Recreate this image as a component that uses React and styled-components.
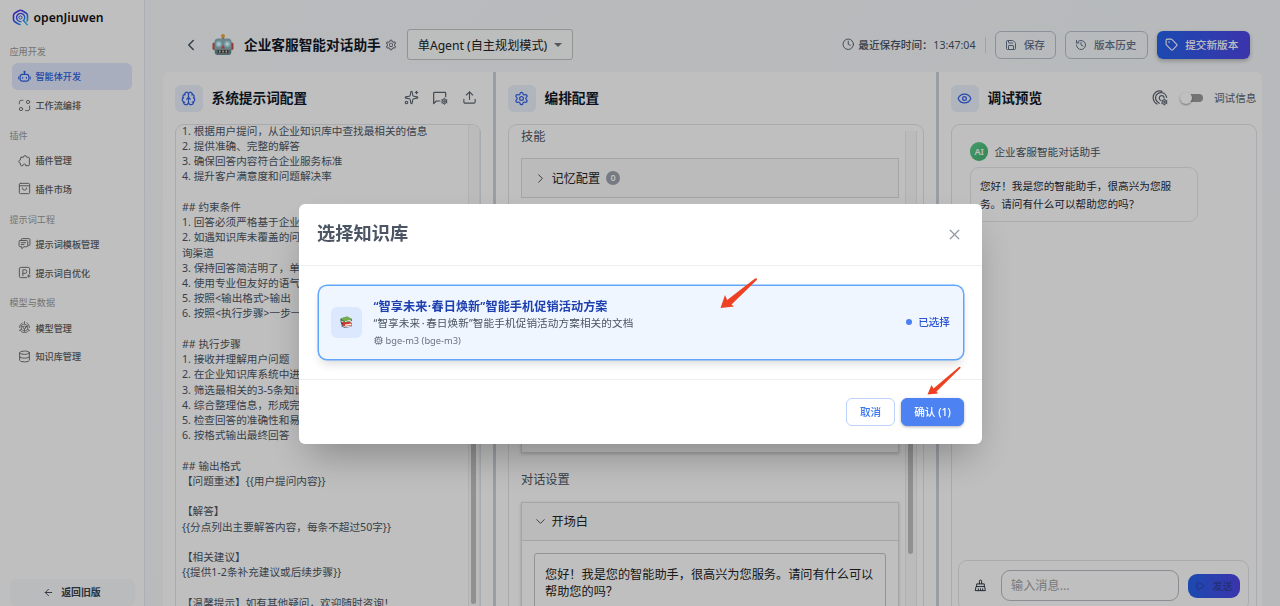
import React from "react";
import styled, { createGlobalStyle, css } from "styled-components";
import {
  ArrowLeft, Brain, ChevronDown, ChevronLeft, ChevronRight, Clock, Cpu, Database, Eye,
  History, Play, Save, Settings, Sparkles, Tag, Upload, X,
} from "lucide-react";
import { AiOutlineSetting } from "react-icons/ai";

const Global = createGlobalStyle`
  * { box-sizing: border-box; }
  body {
    margin: 0;
    font-family: "Noto Sans", "Noto Sans CJK SC", sans-serif;
    color: #1f2937;
    overflow: hidden;
  }
  svg { display: block; flex: none; }
`;

const Page = styled.div`
  display: flex;
  width: 1280px;
  height: 606px;
  overflow: hidden;
  background: linear-gradient(120deg, #f8fafc 0%, #f4f7fa 100%);
`;

/* ---------- Sidebar ---------- */
const Sidebar = styled.aside`
  display: flex;
  flex-direction: column;
  width: 145px;
  flex: none;
  padding: 8.5px 9.5px 0.5px;
  background: #fff;
  border-right: 1px solid #e5e9f0;
`;
const Brand = styled.div`
  display: flex;
  align-items: center;
  gap: 5px;
  height: 18px;
  padding-left: 2px;
  margin-bottom: 18.5px;
  font-size: 12.2px;
  font-weight: 600;
  color: #111;
`;
const NavGroup = styled.nav`
  height: 83.8px;
  flex: none;
`;
const NavLabel = styled.div`
  height: 14px;
  line-height: 14px;
  margin-bottom: 3.7px;
  font-size: 9.12px;
  color: #9a9a9a;
`;
const NavItem = styled.div`
  display: flex;
  align-items: center;
  gap: 4.5px;
  width: 120px;
  height: 27.3px;
  margin: 0 0 1.4px 2.5px;
  padding-left: 6px;
  border-radius: 6px;
  font-size: 9.12px;
  font-weight: 500;
  color: ${(p) => (p.$active ? "#2f5fe0" : "#5c5c5c")};
  background: ${(p) => (p.$active ? "#e0e8fd" : "transparent")};
  svg { color: ${(p) => (p.$active ? "#2f5fe0" : "#707070")}; }
`;
const OldVersion = styled.div`
  display: flex;
  align-items: center;
  justify-content: center;
  gap: 7px;
  height: 26.5px;
  margin-top: auto;
  border-radius: 6px;
  background: #f9fafb;
  font-size: 9.88px;
  font-weight: 600;
  color: #374151;
`;

/* ---------- Header ---------- */
const Main = styled.main`
  display: flex;
  flex-direction: column;
  flex: 1;
  min-width: 0;
  padding: 0 18px 0 18px;
`;
const Header = styled.header`
  display: flex;
  align-items: center;
  height: 72px;
  flex: none;
  padding: 17px 12px 0 18.5px;
`;
const BackButton = styled.span`
  margin-right: 12.5px;
  color: #4b5563;
`;
const AgentName = styled.h1`
  margin: 0 4.5px 0 10px;
  font-size: 13.68px;
  line-height: 20px;
  font-weight: 700;
  color: #111827;
`;
const ModeSelect = styled.div`
  display: flex;
  align-items: center;
  justify-content: space-between;
  width: 166px;
  height: 31px;
  margin-left: 9.5px;
  padding: 0 10px;
  border: 1px solid #c4c4c4;
  border-radius: 3px;
  background: #fbfcfd;
  font-size: 12.16px;
  color: #222;
`;
const Caret = styled.i`
  border: 4px solid transparent;
  border-top-color: #757575;
  border-bottom: 0;
`;
const SavedAt = styled.div`
  display: flex;
  align-items: center;
  gap: 4px;
  margin-left: auto;
  font-size: 10.64px;
  color: #4b5563;
  b { font-weight: 500; width: 71px; white-space: nowrap; }
`;
const Rule = styled.i`
  width: 1px;
  height: 16px;
  margin: 0 9px;
  background: #d5d9df;
`;
const HeaderButton = styled.button`
  display: flex;
  align-items: center;
  justify-content: center;
  gap: 7px;
  width: ${(p) => p.$w}px;
  height: 28px;
  margin: 0 0 0 ${(p) => p.$ml || 0}px;
  padding: 0 1px 0 0;
  border: 1px solid #b9c2cf;
  border-radius: 6px;
  background: transparent;
  font: 500 10.64px "Noto Sans", "Noto Sans CJK SC", sans-serif;
  color: #64748b;
  ${(p) => p.$primary && css`
    border: 0;
    padding-right: 3px;
    color: #fff;
    background: linear-gradient(90deg, #2563eb, #4f46e5);
    box-shadow: 0 2px 4px rgba(0, 0, 0, 0.25);
  `}
`;

/* ---------- Panels ---------- */
const Panels = styled.div`
  display: flex;
  flex: 1;
  min-height: 0;
  background: #fff;
  border-radius: 6px 6px 0 0;
`;
const Panel = styled.section`
  display: flex;
  flex-direction: column;
  width: ${(p) => p.$w}px;
  flex: none;
  min-height: 0;
  padding: 13px ${(p) => p.$pr}px 0 12px;
`;
const Splitter = styled.i`
  width: 3px;
  flex: none;
  background: #ccd2db;
`;
const PanelHead = styled.div`
  display: flex;
  align-items: center;
  height: 26px;
  flex: none;
  margin-bottom: 13px;
`;
const HeadIcon = styled.span`
  display: grid;
  place-items: center;
  width: 27.5px;
  height: 27px;
  border-radius: 6px;
  background: #eaf0fd;
  color: #3563e9;
`;
const PanelTitle = styled.h2`
  margin: -1px auto 0 9px;
  font-size: 13.68px;
  line-height: 20px;
  font-weight: 700;
  color: #111827;
`;
const HeadActions = styled.div`
  display: flex;
  align-items: center;
  gap: ${(p) => p.$gap}px;
  margin: -1px ${(p) => p.$mr || 0}px 0 0;
  font-size: 10.64px;
  color: #5b6470;
`;
const PanelBody = styled.div`
  display: flex;
  flex: 1;
  min-height: 0;
  border: 1px solid #e2e5e9;
  border-bottom: 0;
  border-radius: 9px 9px 0 0;
  overflow: hidden;
`;
const Prompt = styled.pre`
  flex: 1;
  min-width: 0;
  margin: -1.2px 0 0;
  padding-left: 6px;
  font-family: inherit;
  font-size: 10.64px;
  line-height: 15.215px;
  color: #4b5563;
`;
const Track = styled.div`
  width: 12px;
  flex: none;
  margin: ${(p) => p.$m || "0"};
  padding: 0 2.5px;
  border: solid #ececec;
  border-width: 0 1px;
  background: #fafafa;
`;
const Thumb = styled.div`
  height: ${(p) => p.$h}px;
  margin-top: ${(p) => p.$top}px;
  border-radius: 4px;
  background: #c1c1c1;
`;

/* ---------- Arrangement panel ---------- */
const Config = styled.div`
  flex: 1;
  padding: 2.5px 0 0 12px;
`;
const ConfigLabel = styled.div`
  height: 18px;
  line-height: 18px;
  font-size: 12.16px;
  color: #4b5563;
`;
const Fold = styled.div`
  height: ${(p) => p.$h}px;
  margin: ${(p) => p.$m};
  border: 1px solid #dcdcdc;
  background: #fff;
  box-shadow: ${(p) => (p.$raised ? "0 1px 3px rgba(0,0,0,.2)" : "none")};
`;
const FoldHead = styled.div`
  display: flex;
  align-items: center;
  gap: 4px;
  height: 38px;
  padding-left: 10.5px;
  background: #fafafa;
  font-size: 12.16px;
  color: #222;
  border-bottom: ${(p) => (p.$open ? "1px solid #dcdcdc" : "0")};
`;
const Count = styled.span`
  display: grid;
  place-items: center;
  width: 14px;
  height: 14px;
  margin-left: 2px;
  border-radius: 50%;
  background: #9ca3af;
  color: #fff;
  font-size: 9.12px;
  line-height: 14px;
  font-weight: 600;
`;
const Opening = styled.div`
  margin: 12px 12px 0;
  height: 80px;
  padding: 12px 10px;
  border: 1px solid #c4c4c4;
  border-radius: 3px;
  font-size: 12.16px;
  line-height: 17.4px;
  color: #222;
`;

/* ---------- Preview panel ---------- */
const Switch = styled.span`
  display: flex;
  align-items: center;
  width: 23px;
  height: 12px;
  &::before {
    content: "";
    width: 12px;
    height: 12px;
    border-radius: 50%;
    background: #fff;
    box-shadow: 0 1px 2px rgba(0, 0, 0, 0.4);
    z-index: 1;
  }
  &::after {
    content: "";
    width: 17px;
    height: 8px;
    margin-left: -6px;
    border-radius: 4px;
    background: #9b9b9b;
  }
`;
const Chat = styled.div`
  display: flex;
  flex-direction: column;
  flex: 1;
  padding: 17.5px 7.5px 0 6px;
`;
const Speaker = styled.div`
  display: flex;
  align-items: center;
  gap: 6px;
  height: 18px;
  margin-left: 12px;
  font-size: 10.64px;
  color: #4b5563;
`;
const Avatar = styled.span`
  display: grid;
  place-items: center;
  width: 18.4px;
  height: 18.4px;
  border-radius: 50%;
  background: linear-gradient(135deg, #5bd08b, #45b070);
  color: #fff;
  font-size: 9.12px;
  font-weight: 600;
`;
const Bubble = styled.div`
  width: 228px;
  height: 54.5px;
  margin: 6.5px 0 0 12px;
  padding: 8.5px 9px;
  border: 1px solid #e5e7eb;
  border-radius: 9px;
  font-size: 10.64px;
  line-height: 18px;
  color: #1f2937;
`;
const Composer = styled.div`
  display: flex;
  align-items: center;
  height: 51px;
  flex: none;
  margin-top: auto;
  margin-bottom: -5px;
  padding: 0 8px 0 15px;
  border: 1px solid #e2e5e9;
  border-radius: 9px;
`;
const MessageBox = styled.div`
  display: flex;
  align-items: center;
  width: 178px;
  height: 31px;
  margin: 0 8.5px 0 14px;
  padding: 0 0 1px 9px;
  border: 1px solid #b8bcc3;
  border-radius: 9px;
  font-size: 12.16px;
  color: #a3a3a3;
`;
const Send = styled.div`
  display: flex;
  align-items: center;
  gap: 8px;
  width: 52px;
  height: 24px;
  padding-left: 7px;
  border-radius: 9px;
  background: linear-gradient(90deg, #2563eb, #4f46e5);
  font-size: 9.88px;
  font-weight: 500;
  color: #2d3f9e;
`;

/* ---------- Dialog ---------- */
const Overlay = styled.div`
  position: fixed;
  inset: 0;
  display: flex;
  justify-content: center;
  align-items: flex-start;
  padding: 204px 0 0 1px;
  background: rgba(0, 0, 0, 0.25);
  z-index: 10;
`;
const Dialog = styled.div`
  width: 683px;
  height: 240px;
  border-radius: 6px;
  background: #fff;
  box-shadow: 0 19px 38px -9px rgba(0, 0, 0, 0.3);
`;
const DialogHead = styled.div`
  display: flex;
  align-items: center;
  justify-content: space-between;
  height: 62px;
  padding: 0 19px 0 18px;
  border-bottom: 1px solid #eceef1;
  color: #9099a6;
`;
const DialogTitle = styled.h3`
  margin: -4px 0 0;
  font-size: 18.24px;
  line-height: 26px;
  font-weight: 600;
  color: #4b5563;
`;
const KnowledgeCard = styled.div`
  display: flex;
  align-items: center;
  width: 646px;
  height: 75.5px;
  margin: 18.5px 18.5px 18.5px;
  padding: 0 12.5px;
  border: 1px solid #60a5fa;
  border-radius: 9px;
  background: #eff6ff;
  box-shadow: 0 0 0 0.5px #60a5fa, 0 6px 10px -2px rgba(0, 0, 0, 0.14);
`;
const KnowledgeIcon = styled.span`
  display: grid;
  place-items: center;
  width: 30.5px;
  height: 30.5px;
  border-radius: 6px;
  background: #dbe8fd;
`;
const KnowledgeText = styled.div`
  flex: 1;
  margin: 3px 0 0 12px;
`;
const MidDot = styled.span`
  padding: 0 ${(p) => p.$gap}px;
`;
const KnowledgeName = styled.div`
  height: 17px;
  line-height: 17px;
  font-size: 12.16px;
  letter-spacing: 0.06px;
  font-weight: 600;
  color: #1e40af;
`;
const KnowledgeDesc = styled.div`
  height: 16px;
  line-height: 16px;
  font-size: 10.64px;
  letter-spacing: 0.08px;
  color: #4b5563;
`;
const KnowledgeModel = styled.div`
  display: flex;
  align-items: center;
  gap: 3px;
  height: 18px;
  font-size: 9.3px;
  color: #6b7280;
`;
const Chosen = styled.span`
  display: flex;
  align-items: center;
  gap: 6px;
  margin-top: -1px;
  font-size: 10.64px;
  font-weight: 500;
  color: #2f55d4;
  &::before {
    content: "";
    width: 6px;
    height: 6px;
    border-radius: 50%;
    background: #4a80f0;
  }
`;
const DialogFoot = styled.div`
  display: flex;
  justify-content: flex-end;
  gap: 6px;
  padding: 18px 18px 0;
  border-top: 1px solid #eceef1;
`;
const DialogButton = styled.button`
  width: ${(p) => p.$w}px;
  height: 28px;
  padding: 0 0 1px;
  border: 1px solid ${(p) => (p.$primary ? "#4c82f1" : "#bcd2fc")};
  border-radius: 6px;
  background: ${(p) => (p.$primary ? "#4c82f1" : "#fff")};
  color: ${(p) => (p.$primary ? "#fff" : "#3b76ee")};
  box-shadow: ${(p) => (p.$primary ? "0 1px 3px rgba(0,0,0,.3)" : "none")};
  font: 500 10.64px "Noto Sans", "Noto Sans CJK SC", sans-serif;
`;
const Pointer = styled.svg`
  position: absolute;
  left: ${(p) => p.$x}px;
  top: ${(p) => p.$y}px;
`;

/* ---------- Drawings ---------- */
const Line = ({ size = 13, children, sw = 1.8 }) => (
  <svg width={size} height={size} viewBox="0 0 24 24" fill="none" stroke="currentColor" strokeWidth={sw} strokeLinecap="round" strokeLinejoin="round">
    {children}
  </svg>
);
const Logo = () => (
  <svg width="17" height="17" viewBox="0 0 34 34" fill="none">
    <defs>
      <linearGradient id="lg" x1="4" y1="2" x2="28" y2="32" gradientUnits="userSpaceOnUse">
        <stop stopColor="#5a2be8" /><stop offset=".5" stopColor="#3154f0" /><stop offset="1" stopColor="#27c4f2" />
      </linearGradient>
    </defs>
    <path d="M16 31 12 29.500 5.500 25.500Q3 23.500 3 20.500V13Q3 10 6 8L13.500 3.500Q17 1.500 20.500 3.500L28 8Q31 10 31 13V20.500Q31 22.500 30 24" stroke="url(#lg)" strokeWidth="3.200" strokeLinecap="round" strokeLinejoin="round" />
    <path d="M22.500 22.500 30.500 31.500M24.500 21A8.200 8.200 0 1 0 18 25.200" stroke="url(#lg)" strokeWidth="2.800" strokeLinecap="round" />
    <circle cx="17" cy="17" r="3.200" stroke="url(#lg)" strokeWidth="2" />
  </svg>
);
const AgentIcon = () => (
  <Line sw={2}><path d="M12 4v4M1.500 12.500v4M22.500 12.500v4M8.500 13.500v1.500M15.500 13.500v1.500" /><rect x="4" y="8" width="16" height="12.500" rx="4" /><circle cx="12" cy="3.500" r="1" /></Line>
);
const FlowIcon = () => (
  <Line><circle cx="18.500" cy="5.500" r="3" /><circle cx="5.500" cy="18.500" r="3" /><path d="M9 2.500H6A3.500 3.500 0 0 0 2.500 6v3M21.500 13v5a3.500 3.500 0 0 1-3.500 3.500h-4" /></Line>
);
const PuzzleIcon = () => (
  <Line><path d="M6 6h4a3 3 0 0 1 6 0h3.500a1.500 1.500 0 0 1 1.500 1.500V20a1.500 1.500 0 0 1-1.500 1.500H15M6 6a1.500 1.500 0 0 0-1.500 1.500V11a3 3 0 0 0 0 6v3A1.500 1.500 0 0 0 6 21.500h3a3 3 0 0 1 6 0" /></Line>
);
const MarketIcon = () => (
  <Line><rect x="2.500" y="2.500" width="19" height="19" rx="2" /><path d="M2.500 7h19M8 11a4 4 0 0 0 8 0" /></Line>
);
const TemplateIcon = () => (
  <Line><path d="M6 5.500V5a2 2 0 0 1 2-2h12a2 2 0 0 1 2 2v9a2 2 0 0 1-2 2h-1" /><path d="M4 6.500h12a2 2 0 0 1 2 2V16a2 2 0 0 1-2 2h-5l-4 3.500V18H4a2 2 0 0 1-2-2V8.500a2 2 0 0 1 2-2ZM6 10.500h8M6 14h5" /></Line>
);
const PromptIcon = () => (
  <Line><path d="M21.500 14V5a2.500 2.500 0 0 0-2.500-2.500H5A2.500 2.500 0 0 0 2.500 5v14A2.500 2.500 0 0 0 5 21.500h11M9 18V7h4a3.300 3.300 0 0 1 0 6.600H9M20 16v5M17.500 18.500h5" /></Line>
);
const ModelIcon = () => (
  <Line sw={1.5}><path d="M8 3.500A9.500 9.500 0 0 0 2.500 12M16 3.500a9.500 9.500 0 0 1 5.500 8.500M4 17.500a9.500 9.500 0 0 0 16 0" /><path d="m12 5.500 6 3.500v6.500l-6 3.500-6-3.500V9Z" /><circle cx="12" cy="12" r="2.500" /><path d="M12 1v4.500M12 14.500V19M14 11l4-2M10 11 6 9M18 15.500l3.500 2M6 15.500l-3.500 2" /></Line>
);
const Robot = () => (
  <svg width="22" height="22" viewBox="0 0 44 44">
    <rect x="20" y="5" width="4" height="6" fill="#9b6a50" /><circle cx="22" cy="4" r="4" fill="#f0a63c" />
    <rect x="1" y="17" width="7" height="15" rx="3" fill="#c8504b" /><rect x="36" y="17" width="7" height="15" rx="3" fill="#c8504b" />
    <rect x="5" y="9" width="34" height="33" rx="7" fill="#8fb2b8" /><path d="M6 31h32v5q0 6-6 6H12q-6 0-6-6Z" fill="#6b8a90" />
    <circle cx="13.500" cy="20" r="6" fill="#a6e5f5" /><circle cx="30.500" cy="20" r="6" fill="#a6e5f5" />
    <circle cx="13.500" cy="20" r="3" fill="#fff" /><circle cx="30.500" cy="20" r="3" fill="#fff" />
    <path d="m22 22 4 7h-8Z" fill="#d5514c" /><rect x="11" y="32" width="22" height="6" rx="2" fill="#3f4447" />
    <path d="M14 33h3v4h-3zM20.500 33h3v4h-3zM27 33h3v4h-3z" fill="#e7d1bd" />
  </svg>
);
const Books = () => (
  <svg width="13" height="13" viewBox="0 0 26 26">
    <path d="M3 19 18 16l6 5-14 3-7-3Z" fill="#394c72" /><path d="m5 20 17-2 1 3-13 2Z" fill="#e9e7e3" />
    <path d="m2 13 14-3 8 4v5L10 21l-8-4Z" fill="#cf3a31" /><path d="m10 17 13-2v3l-13 2Z" fill="#f3ece4" />
    <path d="m1 5 13-4 10 5v4L10 13 2 9Z" fill="#568c3e" /><path d="m10 10 12-3v2l-12 3Z" fill="#efeee8" /><path d="m1 5 13-4 10 5-14 4Z" fill="#75ae51" />
    <path d="M2 6v7l4 3" stroke="#26334d" strokeWidth="1.500" fill="none" />
  </svg>
);
const FlagGear = () => (
  <Line size={16}><path d="M20.500 10V4.500a1 1 0 0 0-1-1H3.500a1 1 0 0 0-1 1V20.500l4-4H12" /><g strokeWidth="1.300"><circle cx="18.500" cy="17" r="3.600" fill="currentColor" fillOpacity=".35" /><circle cx="18.500" cy="17" r="1" /><path d="M18.500 12.300v1M18.500 20.700v1M14.500 14.700l1 .6M21.500 18.700l1 .6M22.500 14.700l-1 .6M15.500 18.700l-1 .6" /></g></Line>
);
const TraceGear = () => (
  <Line size={16}><path d="M7.500 21C1 17.500 0 9 4.500 4.500M11 20c-6-3-7-9-4-13 4-5 13-4 15 4M12.500 15.500c-3-3-1.500-7 2-7 2 0 3.500 1.500 3.500 3M5.500 3.500C8.500 1.500 12 1 15 2" /><g strokeWidth="1.300"><circle cx="18.500" cy="18" r="3.600" fill="currentColor" fillOpacity=".35" /><circle cx="18.500" cy="18" r="1" /><path d="M18.500 13.300v1M18.500 21.700v1M14.500 15.700l1 .6M21.500 19.700l1 .6M22.500 15.700l-1 .6M15.500 19.700l-1 .6" /></g></Line>
);
const Broom = () => (
  <Line size={13} sw={1.7}><path d="M10 9V4a2 2 0 0 1 4 0v5M5 14V9h14v5M4.500 14h15l1.500 7.500H3ZM8 21v-3M12 21v-3M16 21v-3" /></Line>
);

const NAV = [
  ["应用开发", [["智能体开发", AgentIcon, true], ["工作流编排", FlowIcon]]],
  ["插件", [["插件管理", PuzzleIcon], ["插件市场", MarketIcon]]],
  ["提示词工程", [["提示词模板管理", TemplateIcon], ["提示词自优化", PromptIcon]]],
  ["模型与数据", [["模型管理", ModelIcon], ["知识库管理", () => <Database size={13} strokeWidth={1.8} />]]],
];

const PROMPT = `1. 根据用户提问，从企业知识库中查找最相关的信息
2. 提供准确、完整的解答
3. 确保回答内容符合企业服务标准
4. 提升客户满意度和问题解决率

## 约束条件
1. 回答必须严格基于企业
2. 如遇知识库未覆盖的问
询渠道
3. 保持回答简洁明了，单
4. 使用专业但友好的语气
5. 按照<输出格式>输出
6. 按照<执行步骤>一步一

## 执行步骤
1. 接收并理解用户问题
2. 在企业知识库系统中进
3. 筛选最相关的3-5条知识
4. 综合整理信息，形成完
5. 检查回答的准确性和易
6. 按格式输出最终回答

## 输出格式
【问题重述】{{用户提问内容}}

【解答】
{{分点列出主要解答内容，每条不超过50字}}

【相关建议】
{{提供1-2条补充建议或后续步骤}}

【温馨提示】如有其他疑问，欢迎随时咨询！`;

export default function App() {
  return (
    <>
      <Global />
      <Page>
        <Sidebar>
          <Brand><Logo />openJiuwen</Brand>
          {NAV.map(([label, items]) => (
            <NavGroup key={label}>
              <NavLabel>{label}</NavLabel>
              {items.map(([name, Icon, active]) => (
                <NavItem key={name} $active={active}><Icon />{name}</NavItem>
              ))}
            </NavGroup>
          ))}
          <OldVersion><ArrowLeft size={11} />返回旧版</OldVersion>
        </Sidebar>

        <Main>
          <Header>
            <BackButton><ChevronLeft size={18} /></BackButton>
            <Robot />
            <AgentName>企业客服智能对话助手</AgentName>
            <AiOutlineSetting size={12} color="#5b6470" />
            <ModeSelect>单Agent (自主规划模式)<Caret /></ModeSelect>
            <SavedAt><Clock size={12.5} strokeWidth={1.7} /><b>最近保存时间：</b>13:47:04</SavedAt>
            <Rule />
            <HeaderButton $w={61.5}><Save size={12} />保存</HeaderButton>
            <HeaderButton $w={82.5} $ml={9}><History size={12} />版本历史</HeaderButton>
            <HeaderButton $w={93.5} $ml={9} $primary><Tag size={13} />提交新版本</HeaderButton>
          </Header>

          <Panels>
            <Panel $w={330} $pr={12.5}>
              <PanelHead>
                <HeadIcon><Brain size={15} /></HeadIcon>
                <PanelTitle>系统提示词配置</PanelTitle>
                <HeadActions $gap={13.5} $mr={4}>
                  <Sparkles size={15} strokeWidth={1.8} /><FlagGear /><Upload size={15} strokeWidth={1.8} />
                </HeadActions>
              </PanelHead>
              <PanelBody>
                <Prompt>{PROMPT}</Prompt>
                <Track><Thumb $top={180} $h={299} /></Track>
              </PanelBody>
            </Panel>
            <Splitter />
            <Panel $w={440} $pr={12.5}>
              <PanelHead>
                <HeadIcon><Settings size={15} /></HeadIcon>
                <PanelTitle>编排配置</PanelTitle>
              </PanelHead>
              <PanelBody>
                <Config>
                  <ConfigLabel>技能</ConfigLabel>
                  <Fold $h={40} $m="12.5px 0 0">
                    <FoldHead><ChevronRight size={15} strokeWidth={1.6} color="#555" />记忆配置<Count>0</Count></FoldHead>
                  </Fold>
                  <Fold $h={240} $m="15px 0 18px" $raised />
                  <ConfigLabel>对话设置</ConfigLabel>
                  <Fold $h={160} $m="12.5px 0 0" $raised>
                    <FoldHead $open><ChevronDown size={15} strokeWidth={1.6} color="#555" />开场白</FoldHead>
                    <Opening>您好！我是您的智能助手，很高兴为您服务。请问有什么可以帮助您的吗？</Opening>
                  </Fold>
                </Config>
                <Track $m="6px 6px 0"><Thumb $top={120} $h={303} /></Track>
              </PanelBody>
            </Panel>
            <Splitter />
            <Panel $w={323} $pr={5.5}>
              <PanelHead>
                <HeadIcon><Eye size={15} /></HeadIcon>
                <PanelTitle>调试预览</PanelTitle>
                <HeadActions $gap={11.5}><TraceGear /><Switch />调试信息</HeadActions>
              </PanelHead>
              <PanelBody>
                <Chat>
                  <Speaker><Avatar>AI</Avatar>企业客服智能对话助手</Speaker>
                  <Bubble>您好！我是您的智能助手，很高兴为您服务。请问有什么可以帮助您的吗？</Bubble>
                  <Composer>
                    <Broom />
                    <MessageBox>输入消息...</MessageBox>
                    <Send><Play size={10} />发送</Send>
                  </Composer>
                </Chat>
              </PanelBody>
            </Panel>
          </Panels>
        </Main>
      </Page>

      <Overlay>
        <Dialog>
          <DialogHead><DialogTitle>选择知识库</DialogTitle><X size={17} strokeWidth={1.8} /></DialogHead>
          <KnowledgeCard>
            <KnowledgeIcon><Books /></KnowledgeIcon>
            <KnowledgeText>
              <KnowledgeName>“智享未来<MidDot $gap={0.3}>·</MidDot>春日焕新”智能手机促销活动方案</KnowledgeName>
              <KnowledgeDesc>“智享未来<MidDot $gap={1.5}>·</MidDot>春日焕新”智能手机促销活动方案相关的文档</KnowledgeDesc>
              <KnowledgeModel><Cpu size={9} />bge-m3 (bge-m3)</KnowledgeModel>
            </KnowledgeText>
            <Chosen>已选择</Chosen>
          </KnowledgeCard>
          <DialogFoot>
            <DialogButton $w={49}>取消</DialogButton>
            <DialogButton $w={63} $primary>确认 (1)</DialogButton>
          </DialogFoot>
        </Dialog>
        <Pointer $x={719} $y={277} width="40" height="33" viewBox="0 0 40 33">
          <path d="M1.500 31 6 18l2.200 5L36 1.500q2-.8 2 1.200L12.500 27.500l2.500 2Z" fill="#ee4023" />
        </Pointer>
        <Pointer $x={926} $y={365} width="36" height="31" viewBox="0 0 36 31">
          <path d="M1.500 29.500 5.500 20l2 3.500L33 2q1.800-.8 1.500 1L10.500 26.500l1.500 2Z" fill="#ee4023" />
        </Pointer>
      </Overlay>
    </>
  );
}
